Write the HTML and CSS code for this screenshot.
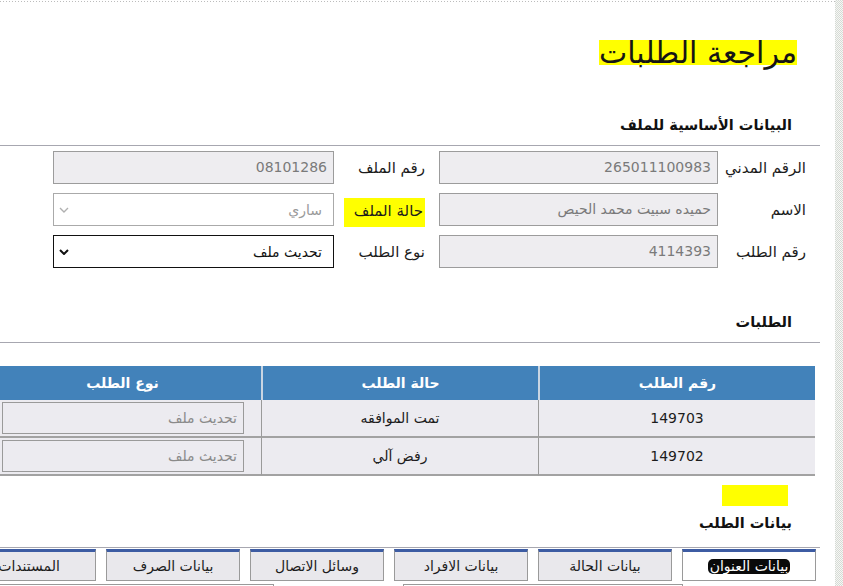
FILE: index.html
```html
<!DOCTYPE html>
<html lang="ar">
<head>
<meta charset="utf-8">
<link rel="stylesheet" href="styles.css">
</head>
<body>
<div class="page">
  <main class="main">
    <div class="dots"></div>
    <h1 class="title"><mark class="hl">مراجعة الطلبات</mark></h1>

    <h2 class="section">البيانات الأساسية للملف</h2>
    <div class="rule"></div>
    <div class="form">
      <span class="lbl">الرقم المدني</span>
      <div class="field">265011100983</div>
      <span></span>
      <span class="lbl">رقم الملف</span>
      <div class="field">08101286</div>

      <span class="lbl">الاسم</span>
      <div class="field">حميده سبيت محمد الحيص</div>
      <span></span>
      <span class="lbl"><mark class="lblmark">حالة الملف</mark></span>
      <div class="select disabled"><span>ساري</span><svg class="chev" viewBox="0 0 10 6" width="10" height="6"><path d="M1 1 L5 5 L9 1" fill="none" stroke="#b0b0b0" stroke-width="1.4"/></svg></div>

      <span class="lbl">رقم الطلب</span>
      <div class="field">4114393</div>
      <span></span>
      <span class="lbl">نوع الطلب</span>
      <div class="select active"><span>تحديث ملف</span><svg class="chev" viewBox="0 0 10 6" width="10" height="6"><path d="M1 1 L5 5 L9 1" fill="none" stroke="#111" stroke-width="2"/></svg></div>
    </div>

    <h2 class="section s2">الطلبات</h2>
    <div class="rule"></div>
    <table class="grid">
      <thead>
        <tr><th>رقم الطلب</th><th>حالة الطلب</th><th>نوع الطلب</th></tr>
      </thead>
      <tbody>
        <tr><td>149703</td><td>تمت الموافقه</td><td class="cellwrap"><div class="cellfield">تحديث ملف</div></td></tr>
        <tr><td>149702</td><td>رفض آلي</td><td class="cellwrap"><div class="cellfield">تحديث ملف</div></td></tr>
      </tbody>
    </table>

    <div class="blob"></div>
    <h2 class="section s3">بيانات الطلب</h2>
    <div class="rule r3"></div>
    <div class="tabs">
      <div class="tab on"><span class="pill">بيانات العنوان</span></div>
      <div class="tab">بيانات الحالة</div>
      <div class="tab">بيانات الافراد</div>
      <div class="tab">وسائل الاتصال</div>
      <div class="tab">بيانات الصرف</div>
      <div class="tab">المستندات</div>
    </div>
    <div class="boxes">
      <div class="box"></div>
      <div class="box"></div>
    </div>
  </main>
  <div class="strip"></div>
</div>
</body>
</html>
```
FILE: styles.css
```css
* { box-sizing: border-box; }
html, body { margin: 0; padding: 0; background: #fff; }
body {
  font-family: "DejaVu Sans", sans-serif;
  color: #1c1c1c;
  width: 843px;
  height: 586px;
  overflow: hidden;
}
.page { display: flex; height: 586px; }
.main {
  width: 835px;
  flex: none;
  overflow: hidden;
  direction: rtl;
  padding-right: 15px;
  padding-top: 1px;
}
.dots {
  height: 1px;
  margin-right: -15px;
  background: linear-gradient(to right, #bcbcbc 0 1px, transparent 1px 3px) 0 0 / 3px 1px repeat-x;
}
.title {
  margin: 31px 23px 0 0;
  font-size: 30px;
  line-height: 40px;
  font-weight: normal;
}
.hl {
  color: #151515;
  background: linear-gradient(#ffff00, #ffff00) 0 55% / 100% 72% no-repeat;
}
.section {
  margin: 40px 28px 0 0;
  font-size: 14.5px;
  line-height: 24px;
  font-weight: bold;
  color: #111;
}
.rule {
  margin-top: 8px;
  height: 1px;
  background: #a7a7b0;
}
.form {
  margin-top: 5px;
  padding-right: 14px;
  display: grid;
  grid-template-columns: 88px 279px 14px 91px 281px;
  grid-auto-rows: 33px;
  row-gap: 9px;
  align-items: center;
}
.lbl {
  font-size: 15px;
  color: #1c1c1c;
  white-space: nowrap;
}
.lblmark {
  display: inline-block;
  background: #ffff00;
  color: #1c1c1c;
  padding: 4px 2px 7px 10px;
  margin-top: 6px;
}
.field {
  height: 33px;
  border: 1px solid #9c9c9c;
  background: #eeedf0;
  color: #7a7a7a;
  font-size: 14px;
  line-height: 31px;
  padding-right: 6px;
  white-space: nowrap;
  overflow: hidden;
}
.select {
  height: 33px;
  display: flex;
  align-items: center;
  justify-content: space-between;
  padding: 0 11px 0 5px;
  font-size: 14px;
  background: #fff;
}
.select.disabled { border: 1px solid #aaaaaa; color: #9a9a9a; }
.select.active { border: 1px solid #111; color: #111; }
.chev { display: block; }

.s2 { margin-top: 42px; }

.grid {
  width: 831px;
  margin: 23px 5px 0 0;
  border-collapse: separate;
  border-spacing: 0;
  table-layout: fixed;
}
.grid th {
  height: 34px;
  background: #4282ba;
  color: #fff;
  font-size: 14px;
  font-weight: bold;
  border-left: 2px solid #c9d5e2;
  padding: 0;
}
.grid th:last-child { border-left: none; }
.grid td {
  height: 38px;
  background: #ecebf0;
  border-bottom: 2px solid #a2a2a2;
  border-left: 1px solid #9a9a9a;
  text-align: center;
  font-size: 14px;
  color: #1c1c1c;
  padding: 0;
}
.grid td:last-child { border-left: none; }
.grid td.cellwrap { padding: 0 17px 0 18px; }
.cellfield {
  height: 32px;
  border: 1px solid #9a9a9a;
  color: #8a8a8a;
  text-align: right;
  padding-right: 6px;
  line-height: 30px;
  font-size: 14px;
}

.blob {
  width: 66px;
  height: 21px;
  margin: 9px 32px 0 0;
  background: #ffff00;
}
.s3 { margin-top: 5px; }
.r3 { margin-top: 12px; }

.tabs {
  display: flex;
  gap: 10px;
  margin: 1px 4px 0 0;
}
.tab {
  flex: none;
  width: 134px;
  height: 32px;
  border: 1px solid #9a9a9a;
  border-top: 3px solid #3d5ca3;
  background: #e9e8ec;
  font-size: 14px;
  color: #1c1c1c;
  display: flex;
  align-items: center;
  justify-content: center;
  white-space: nowrap;
}
.tab.on { background: #fff; }
.pill {
  background: #0a0a0a;
  color: #fff;
  border-radius: 5px;
  padding: 0 2px;
  line-height: 15px;
}
.boxes {
  display: flex;
  gap: 129px;
  margin-top: 3px;
  padding-right: 137px;
}
.box {
  flex: none;
  width: 280px;
  height: 30px;
  border: 1px solid #9a9a9a;
}
.strip {
  flex: none;
  width: 8px;
  height: 586px;
  background: repeating-conic-gradient(#d5dbd5 0 25%, #f7f7f5 0 50%) 0 0 / 2px 2px;
}
```
